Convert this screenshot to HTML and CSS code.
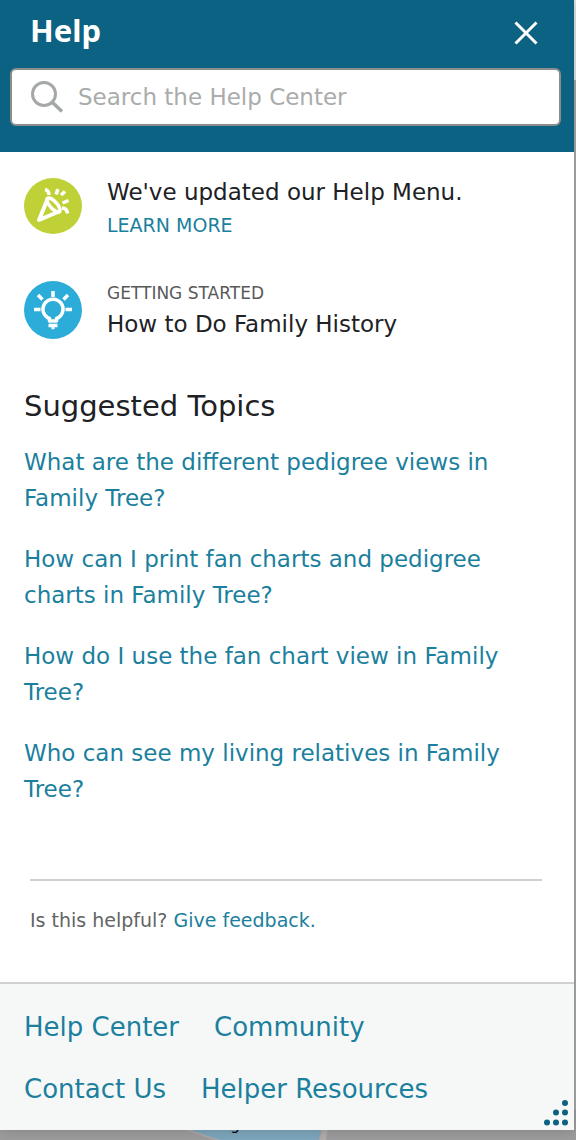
FILE: index.html
```
<!DOCTYPE html>
<html lang="en">
<head>
    <meta charset="UTF-8">
    <meta name="viewport" content="width=device-width, initial-scale=1">
    <title>Help</title>
    <link rel="stylesheet" href="styles.css">
</head>
<body>
<!-- map behind the panel -->
<svg class="map" width="576" height="30" viewBox="0 0 576 30" aria-hidden="true">
    <path d="M125 0L215 30H322L330 0z" fill="#b0a9a7"/>
    <path d="M130 0L220 30H319L326 0z" fill="#7ea7bd"/>
    <path d="M328 0L322 40" stroke="#b0adac" stroke-width="5"/>
    <text x="221" y="20" font-size="15">og</text>
</svg>
<div class="panel">
    <header class="head">
        <div class="head-top">
            <h1>Help</h1>
            <button type="button" class="close" aria-label="Close">
                <svg width="24" height="24" viewBox="0 0 24 24"><path d="M1.500 1.500L22.500 22.500M22.500 1.500L1.500 22.500" stroke="#fff" stroke-width="3"/></svg>
            </button>
        </div>
        <form class="search">
            <svg width="34" height="34" viewBox="0 0 34 34" fill="none" stroke="#a4a8a7" stroke-width="3"><circle cx="14" cy="14" r="11.500"/><path d="M22.500 22.500L32 31.500" stroke-width="3.500"/></svg>
            <input type="text" aria-label="Search the Help Center" placeholder="Search the Help Center">
        </form>
    </header>
    <main class="content">
        <section class="card">
            <svg class="icon" width="58" height="58" viewBox="0 0 58 58" fill="none" stroke="#fff" stroke-width="3.500">
                <ellipse cx="29" cy="29" rx="29" ry="28" fill="#bfd137" stroke="none"/>
                <path d="M24 21L15 43L35 34.500" stroke-width="4" stroke-linejoin="round"/>
                <ellipse cx="29.500" cy="28" rx="3.500" ry="9" transform="rotate(-42 29.500 28)"/>
                <path d="M21 12.500Q25 13.500 25 18M33.800 12L32.200 17.500M41 14.500L37 18M38.500 26L44.500 23.500M38 31Q43 31 43.500 36.500"/>
            </svg>
            <div class="card-text">
                <p class="lead">We've updated our Help Menu.</p>
                <a class="more" href="#">LEARN MORE</a>
            </div>
        </section>
        <section class="card">
            <svg class="icon" width="58" height="58" viewBox="0 0 58 58" fill="none" stroke="#fff" stroke-width="3.500">
                <circle cx="29" cy="29" r="29" fill="#2cacd8" stroke="none"/>
                <path d="M25.500 40V37.500A10 10 0 1 1 32.500 37.500V40z" stroke-linejoin="round"/>
                <path d="M24.500 44.500H33.500M27.500 46.500H30.500M29 10V16M14 14L18.500 18.500M44 14L39.500 18.500M10 28.500H16.500M41.500 28.500H48"/>
            </svg>
            <div class="card-text">
                <p class="label">GETTING STARTED</p>
                <p class="lead">How to Do Family History</p>
            </div>
        </section>
        <h2>Suggested Topics</h2>
        <ul class="topics">
            <li><a href="#">What are the different pedigree views in Family Tree?</a></li>
            <li><a href="#">How can I print fan charts and pedigree charts in Family Tree?</a></li>
            <li><a href="#">How do I use the fan chart view in Family Tree?</a></li>
            <li><a href="#">Who can see my living relatives in Family Tree?</a></li>
        </ul>
        <p class="feedback">Is this helpful? <a href="#">Give feedback.</a></p>
    </main>
    <footer class="foot">
        <nav>
            <div class="row"><a href="#">Help Center</a><a href="#">Community</a></div>
            <div class="row"><a href="#">Contact Us</a><a href="#">Helper Resources</a></div>
        </nav>
        <svg class="grip" width="24" height="26" viewBox="0 0 24 26" fill="#0c6283" aria-hidden="true">
            <circle cx="21" cy="3" r="3"/>
            <circle cx="12" cy="12.500" r="3"/><circle cx="21" cy="12.500" r="3"/>
            <circle cx="3" cy="22.500" r="3"/><circle cx="12" cy="22.500" r="3"/><circle cx="21" cy="22.500" r="3"/>
        </svg>
    </footer>
</div>
</body>
</html>
```
FILE: styles.css
```
*{
    margin:0;
    padding:0;
    box-sizing: border-box;
}
body{
    min-height: 100vh;
    display: flex;
    padding: 0 2px 10px 0;
    position: relative;
    background: linear-gradient(#e4e4e4 80px, #a9a9a9 80px);
    font-family: Verdana, "DejaVu Sans", sans-serif;
    color: #202124;
}
a{
    color: #1b7f9e;
    text-decoration: none;
}
.map{
    position: absolute;
    left:0;
    bottom:0;
    background: #9d9d9d;
}
.panel{
    position: relative;
    flex: 1;
    display: flex;
    flex-direction: column;
    background: #fff;
    box-shadow: 0 0 14px rgba(0,0,0,0.2);
}
.head{
    padding: 0 13px 26px 10px;
    background: #0c6283;
}
.head-top{
    display: flex;
    justify-content: space-between;
    align-items: flex-start;
    padding: 0 23px 8px 20px;
}
h1{
    font: bold 31px/60px "Noto Sans", sans-serif;
    color: #fff;
}
.close{
    display: flex;
    margin-top: 21px;
    border: none;
    background: none;
    cursor: pointer;
}
.search{
    display: flex;
    align-items: center;
    gap: 14px;
    height: 58px;
    padding: 0 18px;
    border: 2px solid #8b8d8d;
    border-radius: 6px;
    background: #fff;
}
.search svg{
    flex: none;
}
.search input{
    flex: 1;
    min-width: 0;
    border: none;
    outline: none;
    font: 23px/30px Verdana, "DejaVu Sans", sans-serif;
}
.search input::placeholder{
    color: #a9acab;
    opacity: 1;
}
.content{
    flex: 1;
    padding: 23px 32px 40px 24px;
}
.card{
    display: flex;
    gap: 25px;
    margin-bottom: 34px;
}
.icon{
    flex: none;
    margin-top: 2px;
}
.card-text{
    height: 70px;
}
.lead{
    font-size: 23px;
    line-height: 34px;
}
.more{
    font-size: 19px;
    line-height: 32px;
}
.label{
    font-size: 17px;
    line-height: 28px;
    color: #58595b;
}
h2{
    font-size: 29px;
    font-weight: normal;
    line-height: 46px;
    margin-bottom: 15px;
}
.topics{
    display: flex;
    flex-direction: column;
    gap: 25px;
    list-style: none;
    font-size: 23px;
    line-height: 36px;
}
.feedback{
    margin: 72px 0 0 6px;
    padding-top: 24px;
    border-top: 2px solid #cfd1d0;
    font-size: 19px;
    line-height: 30px;
    color: #636463;
}
.foot{
    position: relative;
    padding: 25px 24px 23px;
    border-top: 2px solid #cfd1d0;
    background: #f6f8f8;
    font-size: 26px;
    line-height: 36px;
}
.foot nav{
    display: flex;
    flex-direction: column;
    gap: 26px;
}
.row{
    display: flex;
    flex-wrap: wrap;
    gap: 0 35px;
}
.grip{
    position: absolute;
    right: 6px;
    bottom: 4px;
}
```
